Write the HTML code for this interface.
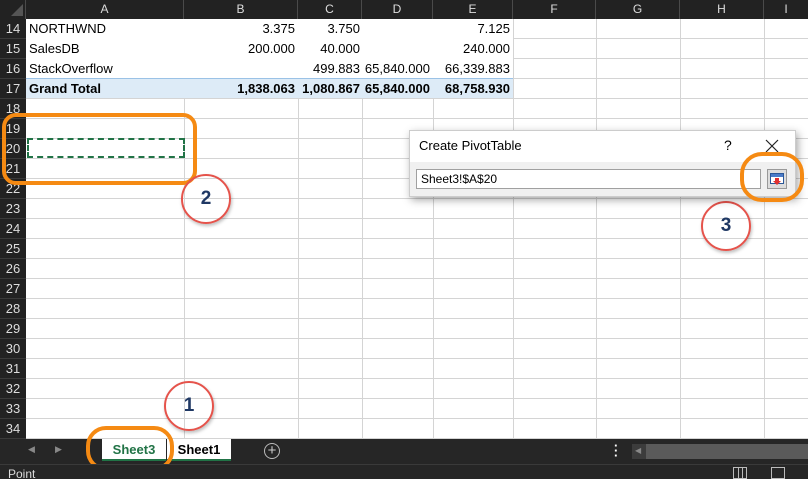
<!DOCTYPE html>
<html><head><meta charset="utf-8"><style>
*{margin:0;padding:0;box-sizing:border-box}
body{width:808px;height:479px;overflow:hidden;position:relative;background:#fff;font-family:"Liberation Sans",sans-serif;font-size:13px;color:#000}
.a{position:absolute}
.ch{position:absolute;top:0;height:19px;background:#222;color:#ddd;font-size:12px;text-align:center;line-height:19px;border-right:1px solid #4a4a4a}
.rh{position:absolute;left:0;width:26px;height:20px;background:#222;color:#ddd;font-size:13px;text-align:center;line-height:20px;border-bottom:1px solid #3a3a3a}
.vl{position:absolute;top:19px;height:420px;width:1px;background:#d4d4d4}
.hl{position:absolute;left:26px;width:782px;height:1px;background:#d4d4d4}
.t{position:absolute;height:20px;line-height:20px;white-space:nowrap}
.r{text-align:right}
.circ{position:absolute;border:2px solid #e5534b;border-radius:50%;width:50px;height:50px;color:#1f3864;font-weight:bold;font-size:19px;text-align:center;line-height:46px;box-shadow:1px 2px 3px rgba(0,0,0,.25)}
.orng{position:absolute;border:4px solid #f58a13;border-radius:14px}
</style></head><body>
<div class="a" style="left:0;top:0;width:26px;height:19px;background:#222;border-right:1px solid #4a4a4a"></div>
<svg class="a" style="left:10px;top:3px" width="14" height="14"><polygon points="13,1 13,13 1,13" fill="#555"/></svg>
<div class="ch" style="left:26px;width:158px">A</div>
<div class="ch" style="left:184px;width:114px">B</div>
<div class="ch" style="left:298px;width:64px">C</div>
<div class="ch" style="left:362px;width:71px">D</div>
<div class="ch" style="left:433px;width:80px">E</div>
<div class="ch" style="left:513px;width:83px">F</div>
<div class="ch" style="left:596px;width:84px">G</div>
<div class="ch" style="left:680px;width:84px">H</div>
<div class="ch" style="left:764px;width:44px;border:none">I</div>
<div class="rh" style="top:19px">14</div><div class="rh" style="top:39px">15</div><div class="rh" style="top:59px">16</div><div class="rh" style="top:79px">17</div><div class="rh" style="top:99px">18</div><div class="rh" style="top:119px">19</div><div class="rh" style="top:139px">20</div><div class="rh" style="top:159px">21</div><div class="rh" style="top:179px">22</div><div class="rh" style="top:199px">23</div><div class="rh" style="top:219px">24</div><div class="rh" style="top:239px">25</div><div class="rh" style="top:259px">26</div><div class="rh" style="top:279px">27</div><div class="rh" style="top:299px">28</div><div class="rh" style="top:319px">29</div><div class="rh" style="top:339px">30</div><div class="rh" style="top:359px">31</div><div class="rh" style="top:379px">32</div><div class="rh" style="top:399px">33</div><div class="rh" style="top:419px">34</div>
<div class="vl" style="left:184px"></div><div class="vl" style="left:298px"></div><div class="vl" style="left:362px"></div><div class="vl" style="left:433px"></div><div class="vl" style="left:513px"></div><div class="vl" style="left:596px"></div><div class="vl" style="left:680px"></div><div class="vl" style="left:764px"></div>
<div class="hl" style="top:38px"></div><div class="hl" style="top:58px"></div><div class="hl" style="top:78px"></div><div class="hl" style="top:98px"></div><div class="hl" style="top:118px"></div><div class="hl" style="top:138px"></div><div class="hl" style="top:158px"></div><div class="hl" style="top:178px"></div><div class="hl" style="top:198px"></div><div class="hl" style="top:218px"></div><div class="hl" style="top:238px"></div><div class="hl" style="top:258px"></div><div class="hl" style="top:278px"></div><div class="hl" style="top:298px"></div><div class="hl" style="top:318px"></div><div class="hl" style="top:338px"></div><div class="hl" style="top:358px"></div><div class="hl" style="top:378px"></div><div class="hl" style="top:398px"></div><div class="hl" style="top:418px"></div><div class="hl" style="top:438px"></div>
<div class="a" style="left:26px;top:19px;width:487px;height:59px;background:#fff"></div>
<div class="a" style="left:26px;top:78px;width:487px;height:20px;background:#ddebf7;border-top:1px solid #9bc2e6"></div>
<div class="t" style="left:29px;top:19px">NORTHWND</div>
<div class="t" style="left:29px;top:39px">SalesDB</div>
<div class="t" style="left:29px;top:59px">StackOverflow</div>
<div class="t" style="left:29px;top:79px;font-weight:bold">Grand Total</div>
<div class="t r" style="left:184px;width:111px;top:19px">3.375</div>
<div class="t r" style="left:184px;width:111px;top:39px">200.000</div>
<div class="t r" style="left:184px;width:111px;top:79px;font-weight:bold">1,838.063</div>
<div class="t r" style="left:298px;width:62px;top:19px">3.750</div>
<div class="t r" style="left:298px;width:62px;top:39px">40.000</div>
<div class="t r" style="left:298px;width:62px;top:59px">499.883</div>
<div class="t r" style="left:296px;width:64px;top:79px;font-weight:bold">1,080.867</div>
<div class="t r" style="left:362px;width:68px;top:59px">65,840.000</div>
<div class="t r" style="left:362px;width:68px;top:79px;font-weight:bold">65,840.000</div>
<div class="t r" style="left:433px;width:77px;top:19px">7.125</div>
<div class="t r" style="left:433px;width:77px;top:39px">240.000</div>
<div class="t r" style="left:433px;width:77px;top:59px">66,339.883</div>
<div class="t r" style="left:433px;width:77px;top:79px;font-weight:bold">68,758.930</div>
<div class="a" style="left:27px;top:138px;width:158px;height:20px;border:2px dashed #217346"></div>
<div class="orng" style="left:2px;top:113px;width:195px;height:72px"></div>
<div class="circ" style="left:181px;top:174px">2</div>
<div class="circ" style="left:164px;top:381px">1</div>
<div class="circ" style="left:701px;top:201px">3</div>
<div class="a" style="left:409px;top:130px;width:387px;height:67px;background:#f0f0f0;border:1px solid #ccc;box-shadow:2px 3px 8px rgba(0,0,0,.35)">
 <div class="a" style="left:0;top:0;width:385px;height:31px;background:#fff"></div>
 <div class="a" style="left:9px;top:7px;font-size:13px">Create PivotTable</div>
 <div class="a" style="left:314px;top:6px;font-size:14px">?</div>
 <svg class="a" style="left:355px;top:8px" width="14" height="14"><path d="M1 1L13 13M13 1L1 13" stroke="#222" stroke-width="1.2"/></svg>
 <div class="a" style="left:6px;top:38px;width:345px;height:20px;background:#fff;border:1px solid #a0a0a0;font-size:12px;line-height:18px;padding-left:4px">Sheet3!$A$20</div>
 <div class="a" style="left:357px;top:38px;width:20px;height:20px;background:#ddd;border:1px solid #999"></div>
 <svg class="a" style="left:360px;top:42px" width="14" height="12"><rect x="0.5" y="0.5" width="13" height="10" fill="#fff" stroke="#2b5797"/><rect x="1" y="1" width="12" height="3" fill="#4a7bc8"/><path d="M5 5h4v3h2l-4 4-4-4h2z" fill="#e03030"/></svg>
</div>
<div class="orng" style="left:740px;top:152px;width:64px;height:50px;border-radius:22px"></div>
<div class="a" style="left:0;top:439px;width:808px;height:25px;background:#262626"></div>
<div class="a" style="left:28px;top:444px;color:#888;font-size:9px">◀</div>
<div class="a" style="left:55px;top:444px;color:#888;font-size:9px">▶</div>
<div class="a" style="left:102px;top:439px;width:64px;height:22px;background:#fff;border-bottom:2px solid #217346;color:#217346;font-weight:bold;text-align:center;line-height:22px">Sheet3</div>
<div class="a" style="left:167px;top:439px;width:64px;height:22px;background:#fff;border-bottom:2px solid #217346;font-weight:bold;text-align:center;line-height:22px">Sheet1</div>
<div class="a" style="left:264px;top:443px;width:16px;height:16px;border:1.5px solid #bbb;border-radius:50%;color:#ccc;text-align:center;line-height:13px;font-size:15px">+</div>
<div class="a" style="left:614px;top:443px;color:#fff;font-size:13px;font-weight:bold;line-height:5px">·<br>·<br>·</div>
<div class="a" style="left:632px;top:444px;width:176px;height:15px;background:#5a5a5a;border-left:14px solid #3c3c3c"></div>
<div class="a" style="left:635px;top:446px;color:#888;font-size:8px">◀</div>
<div class="orng" style="left:86px;top:426px;width:88px;height:45px;border-radius:20px"></div>
<div class="a" style="left:0;top:464px;width:808px;height:15px;background:#262626;border-top:1px solid #3a3a3a"></div>
<div class="a" style="left:8px;top:467px;color:#ddd;font-size:12px">Point</div>
<div class="a" style="left:733px;top:467px;width:14px;height:12px;border:1px solid #bbb;background:linear-gradient(90deg,transparent 4px,#bbb 4px,#bbb 5px,transparent 5px,transparent 8px,#bbb 8px,#bbb 9px,transparent 9px)"></div>
<div class="a" style="left:771px;top:467px;width:14px;height:12px;border:1px solid #bbb"></div>
</body></html>
